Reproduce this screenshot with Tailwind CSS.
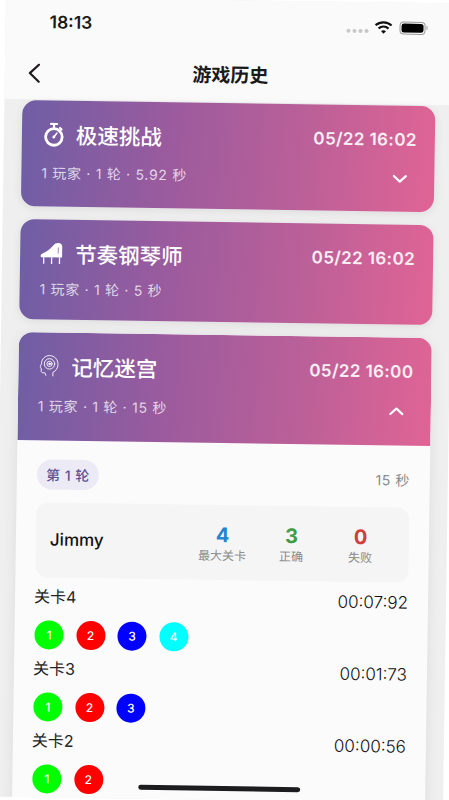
<!DOCTYPE html>
<html lang="zh">

<head>
    <meta charset="UTF-8">
    <meta name="viewport" content="width=device-width, initial-scale=1.0">
    <script src="https://cdn.jsdelivr.net/npm/@tailwindcss/browser@4"></script>
    <title>游戏历史</title>
</head>

<body class="bg-white overflow-hidden font-['Inter','Noto_Sans_CJK_SC',sans-serif]">
    <div class="w-[449px] h-[800px] overflow-hidden bg-white">
        <!-- the whole frame sits slightly tilted in the reference -->
        <div class="relative w-[449px] h-[800px] overflow-hidden bg-[#efefef] rotate-[0.85deg]">
            <header class="bg-[#fafafa] h-[102px]">
                <div class="h-[50px] relative flex items-center pl-[44px] pr-[27px]">
                    <span class="text-[17.5px] font-semibold text-[#1b1b1b]">18:13</span>
                    <div class="ml-auto flex items-center">
                        <div class="flex gap-[2px] mr-[6px] mt-[7px]">
                            <span class="w-[4px] h-[4px] rounded-full bg-[#c8c8c8]"></span>
                            <span class="w-[4px] h-[4px] rounded-full bg-[#c8c8c8]"></span>
                            <span class="w-[4px] h-[4px] rounded-full bg-[#c8c8c8]"></span>
                            <span class="w-[4px] h-[4px] rounded-full bg-[#c8c8c8]"></span>
                        </div>
                        <svg class="w-[18px] h-[14px] mr-[7px]" viewBox="0 0 18 14" fill="none" stroke="#111" stroke-width="2.2">
                            <path d="M1 5c4.500-4 11.500-4 16 0" />
                            <path d="M4 8.200c3-2.600 7-2.600 10 0" />
                            <path d="M9 13.500 6.500 10.800c1.500-1.100 3.500-1.100 5 0z" fill="#111" stroke="none" />
                        </svg>
                        <div class="flex items-center">
                            <div class="w-[26px] h-[13px] rounded-[4px] border border-[#9a9a9a] p-[1px]">
                                <div class="w-full h-full rounded-[2.5px] bg-black"></div>
                            </div>
                            <span class="w-[1.5px] h-[4px] bg-[#9a9a9a] ml-[1px] rounded-r"></span>
                        </div>
                    </div>
                </div>
                <div class="h-[52px] relative flex items-center justify-center">
                    <svg class="absolute left-[23px] top-[16px] w-[13px] h-[20px]" viewBox="0 0 13 20" fill="none" stroke="#1f1a1f" stroke-width="2.2" stroke-linecap="round" stroke-linejoin="round">
                        <path d="M11 1.500 2 10l9 8.500" />
                    </svg>
                    <h1 class="text-[19px] font-semibold text-[#1a1a1a] ml-[2px]">游戏历史</h1>
                </div>
            </header>

            <main class="px-[18px] pt-[1px] flex flex-col">
                <section class="h-[106px] rounded-[14px] shadow-[0_2px_10px_rgba(0,0,0,0.08)] bg-[linear-gradient(94deg,#6f5ea5_0%,#9a5b9e_35%,#bd6098_70%,#e06495_100%)] text-white pl-[20px] pr-[18px] pt-[20px]">
                    <div class="h-[30px] flex items-center">
                        <svg class="w-[22px] h-[25px] ml-[1px] mr-[11px] -mt-[2px]" viewBox="0 0 22 25" fill="none" stroke="#fff" stroke-linecap="round">
                            <path d="M8 1.500h6M11 2v3" stroke-width="2.200" />
                            <path d="M17 5.500l1.500 1.500" stroke-width="2.200" />
                            <circle cx="11" cy="14.500" r="8.300" stroke-width="2.800" />
                            <circle cx="11" cy="14.500" r="1.500" fill="#fff" stroke="none" />
                            <path d="M11 14.500l3-4" stroke-width="1.500" />
                        </svg>
                        <span class="text-[21.5px] font-medium">极速挑战</span>
                        <span class="ml-auto text-[17px] font-semibold tracking-[0.4px] text-white/90">05/22 16:02</span>
                    </div>
                    <div class="h-[20px] mt-[12px] flex items-center">
                        <span class="text-[14px] tracking-[0.7px] text-white/75">1 玩家 · 1 轮 · 5.92 秒</span>
                        <svg class="ml-auto mr-[9px] mt-[2px] w-[15px] h-[9px]" viewBox="0 0 15 9" fill="none" stroke="#fff" stroke-width="2.200" stroke-linecap="round" stroke-linejoin="round">
                            <path d="M1.500 1.500 7.500 7l6-5.500" />
                        </svg>
                    </div>
                </section>

                <section class="mt-[13px] h-[100px] rounded-[14px] shadow-[0_2px_10px_rgba(0,0,0,0.08)] bg-[linear-gradient(94deg,#6f5ea5_0%,#9a5b9e_35%,#bd6098_70%,#e06495_100%)] text-white pl-[20px] pr-[18px] pt-[20px]">
                    <div class="h-[30px] flex items-center">
                        <svg class="w-[23px] h-[22px] mr-[12px] -mt-[2px]" viewBox="0 0 23 22" fill="#fff">
                            <path d="M.500 13.500c0-1 .6-1.500 1.500-2C6 9.500 9.500 7 13 3c1.500-1.800 3-2.500 5-2.500 2.200 0 4 1.300 4 3.500v11H1.500c-.6 0-1-.4-1-1z" />
                            <path d="M3 15h1.300v6.500H3zM10.900 15h1.300v6.500h-1.300zM18.800 15h1.300v6.500h-1.300z" />
                            <path d="M17.600 5h.8v6h-.8z" fill="#9a5b9e" />
                        </svg>
                        <span class="text-[21.5px] font-medium">节奏钢琴师</span>
                        <span class="ml-auto text-[17px] font-semibold tracking-[0.4px] text-white/90">05/22 16:02</span>
                    </div>
                    <div class="h-[20px] mt-[9px] flex items-center">
                        <span class="text-[14px] tracking-[0.7px] text-white/75">1 玩家 · 1 轮 · 5 秒</span>
                    </div>
                </section>

                <section class="mt-[13px] h-[520px] rounded-t-[14px] overflow-hidden bg-[#fbfbfb] shadow-[0_2px_14px_rgba(0,0,0,0.08)]">
                    <div class="h-[108px] bg-[linear-gradient(94deg,#6f5ea5_0%,#9a5b9e_35%,#bd6098_70%,#e06495_100%)] text-white pl-[20px] pr-[18px] pt-[20px]">
                        <div class="h-[30px] flex items-center">
                            <svg class="w-[20px] h-[24px] ml-[1px] mr-[12px] -mt-[3px]" viewBox="0 0 20 24" fill="none" stroke="#fff" stroke-width="0.900" stroke-linecap="round" stroke-linejoin="round">
                                <path d="M13.500 21.500v-3.500c3-1.500 5-4.500 5-8C18.500 5 14.800 1.200 10 1.200 5.500 1.200 2.200 4.500 2 9c0 1-1.200 3-1.500 3.800-.2.600 1.300.8 1.300 1.200v3c0 1 1 1.500 2 1.500h1.700l1 2.500" />
                                <circle cx="10" cy="9.500" r="5.200" />
                                <circle cx="10" cy="9.500" r="2.600" />
                                <circle cx="10" cy="9.500" r="0.800" fill="#fff" />
                            </svg>
                            <span class="text-[21.5px] font-medium">记忆迷宫</span>
                            <span class="ml-auto text-[17px] font-semibold tracking-[0.4px] text-white/90">05/22 16:00</span>
                        </div>
                        <div class="h-[20px] mt-[13px] flex items-center">
                            <span class="text-[14px] tracking-[0.7px] text-white/75">1 玩家 · 1 轮 · 15 秒</span>
                            <svg class="ml-auto mr-[9px] w-[15px] h-[9px]" viewBox="0 0 15 9" fill="none" stroke="#fff" stroke-width="2.200" stroke-linecap="round" stroke-linejoin="round">
                                <path d="M1.500 7.500 7.500 2l6 5.500" />
                            </svg>
                        </div>
                    </div>

                    <div class="px-[20px] pt-[19px]">
                        <div class="flex items-center justify-between h-[30px]">
                            <span class="h-[30px] w-[62px] rounded-[15px] bg-[#ecebf5] flex items-center justify-center text-[14px] font-medium tracking-[0.5px] text-[#5f5397]">第 1 轮</span>
                            <span class="text-[14px] tracking-[0.5px] text-[#8a8a8a]">15 秒</span>
                        </div>

                        <div class="mt-[13px] h-[75px] rounded-[12px] bg-[#f5f5f5] flex items-center pl-[14px]">
                            <span class="text-[17px] font-medium text-[#111] w-[138px]">Jimmy</span>
                            <div class="w-[69px] flex flex-col items-center pt-[2px]">
                                <span class="text-[20px] leading-[24px] font-bold text-[#2583cf]">4</span>
                                <span class="text-[12px] leading-[18px] text-[#8a8a8a]">最大关卡</span>
                            </div>
                            <div class="w-[69px] flex flex-col items-center pt-[2px]">
                                <span class="text-[20px] leading-[24px] font-bold text-[#3d9c44]">3</span>
                                <span class="text-[12px] leading-[18px] text-[#8a8a8a]">正确</span>
                            </div>
                            <div class="w-[69px] flex flex-col items-center pt-[2px]">
                                <span class="text-[20px] leading-[24px] font-bold text-[#d33c3c]">0</span>
                                <span class="text-[12px] leading-[18px] text-[#8a8a8a]">失败</span>
                            </div>
                        </div>

                        <div class="mt-[8px] flex flex-col gap-[8px]">
                            <div>
                                <div class="h-[24px] flex items-center justify-between text-[16px] text-[#222]">
                                    <span class="-ml-[1px] pb-[2px]">关卡4</span>
                                    <span class="pt-[1px] text-[17px] font-light text-[#111]">00:07:92</span>
                                </div>
                                <div class="mt-[11px] flex gap-[12.500px] text-[12px] font-medium text-white">
                                    <span class="w-[29px] h-[29px] rounded-full bg-[#00ff00] flex items-center justify-center">1</span>
                                    <span class="w-[29px] h-[29px] rounded-full bg-[#ff0000] flex items-center justify-center">2</span>
                                    <span class="w-[29px] h-[29px] rounded-full bg-[#0000ff] flex items-center justify-center">3</span>
                                    <span class="w-[29px] h-[29px] rounded-full bg-[#00ffff] flex items-center justify-center">4</span>
                                </div>
                            </div>
                            <div>
                                <div class="h-[24px] flex items-center justify-between text-[16px] text-[#222]">
                                    <span class="-ml-[1px] pb-[2px]">关卡3</span>
                                    <span class="pt-[1px] text-[17px] font-light text-[#111]">00:01:73</span>
                                </div>
                                <div class="mt-[11px] flex gap-[12.500px] text-[12px] font-medium text-white">
                                    <span class="w-[29px] h-[29px] rounded-full bg-[#00ff00] flex items-center justify-center">1</span>
                                    <span class="w-[29px] h-[29px] rounded-full bg-[#ff0000] flex items-center justify-center">2</span>
                                    <span class="w-[29px] h-[29px] rounded-full bg-[#0000ff] flex items-center justify-center">3</span>
                                </div>
                            </div>
                            <div>
                                <div class="h-[24px] flex items-center justify-between text-[16px] text-[#222]">
                                    <span class="-ml-[1px] pb-[2px]">关卡2</span>
                                    <span class="pt-[1px] text-[17px] font-light text-[#111]">00:00:56</span>
                                </div>
                                <div class="mt-[11px] flex gap-[12.500px] text-[12px] font-medium text-white">
                                    <span class="w-[29px] h-[29px] rounded-full bg-[#00ff00] flex items-center justify-center">1</span>
                                    <span class="w-[29px] h-[29px] rounded-full bg-[#ff0000] flex items-center justify-center">2</span>
                                </div>
                            </div>
                        </div>
                    </div>
                </section>
            </main>

            <div class="absolute left-[144px] bottom-[9px] w-[162px] h-[5px] rounded-full bg-[#1c1c1e]"></div>
        </div>
    </div>
</body>

</html>
